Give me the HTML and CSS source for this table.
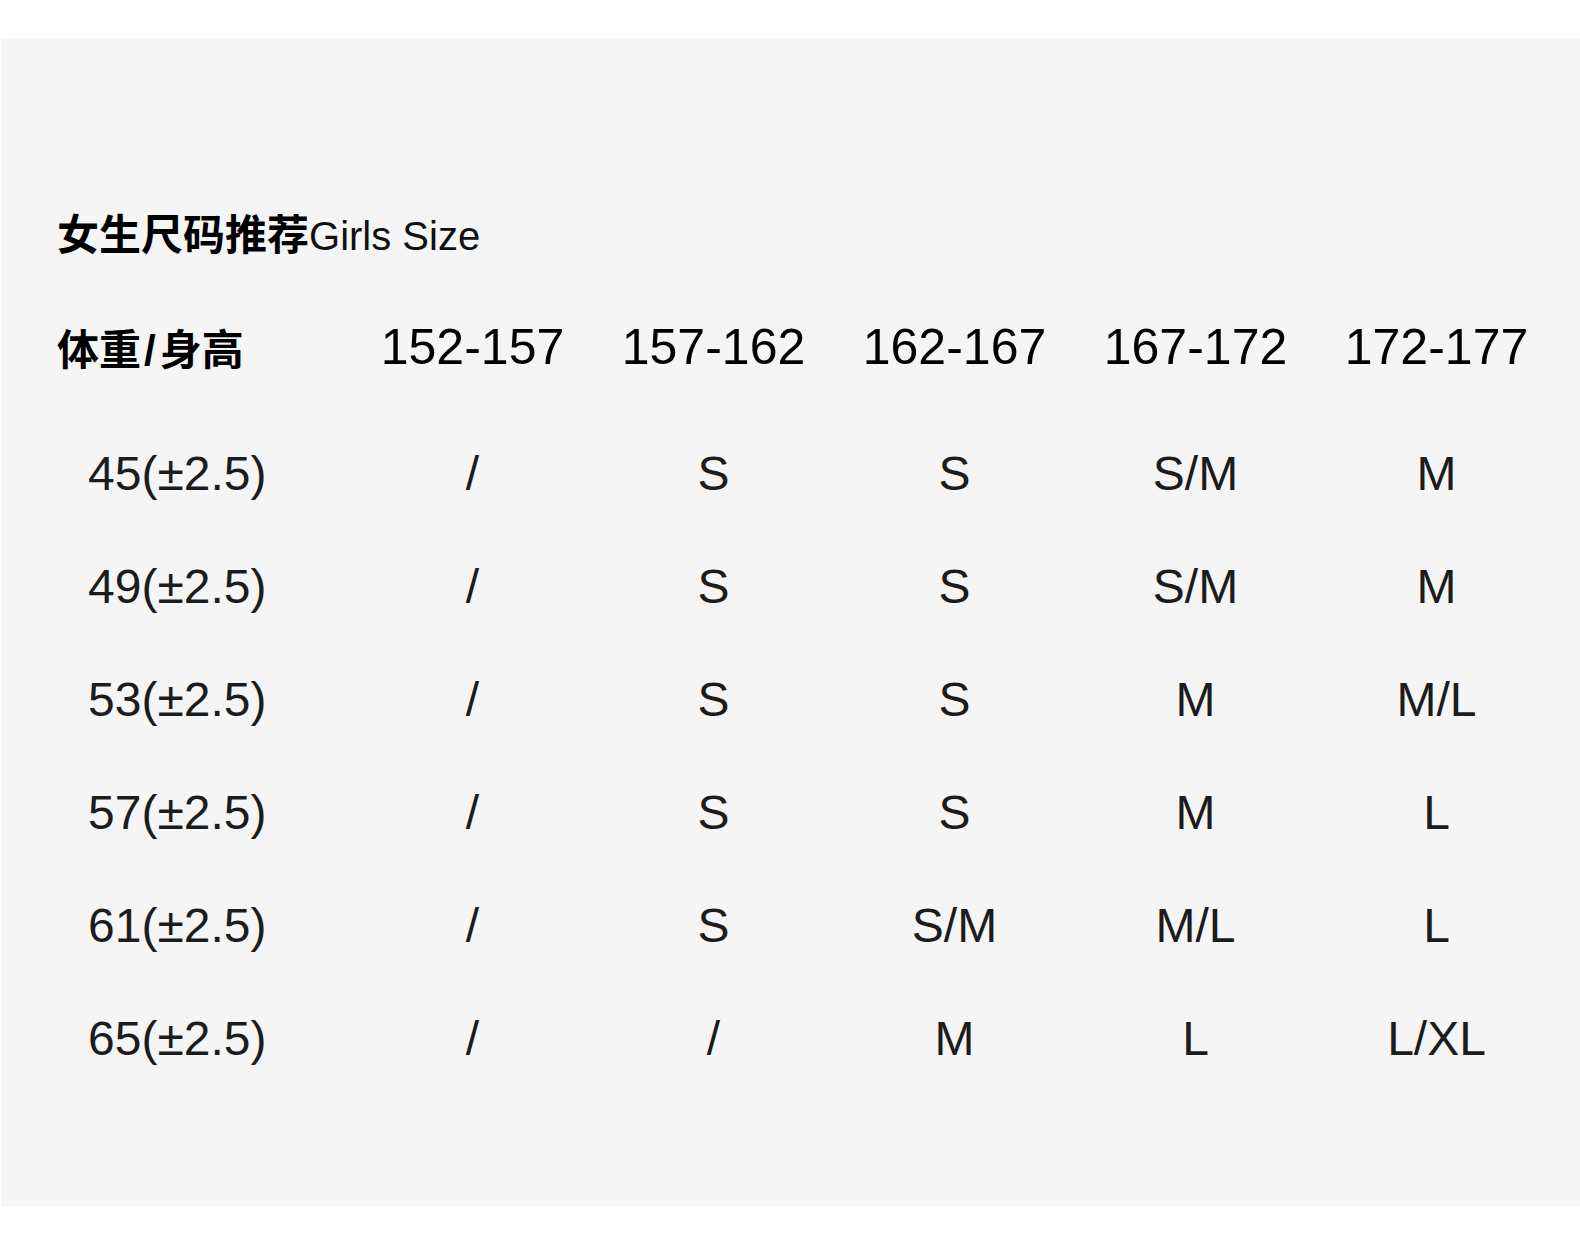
FILE: index.html
```html
<!DOCTYPE html>
<html lang="zh-CN">
<head>
<meta charset="utf-8">
<title>女生尺码推荐 Girls Size</title>
<link rel="stylesheet" href="styles.css">
</head>
<body>
<div class="page">
  <section class="panel">
    <h1 class="title"><span class="cjk">女生尺码推荐</span><span class="latin">Girls Size</span></h1>
    <div class="grid">
      <div class="row head">
        <div class="label">体重<span class="slash">/</span>身高</div>
        <div class="cell">152-157</div>
        <div class="cell">157-162</div>
        <div class="cell">162-167</div>
        <div class="cell">167-172</div>
        <div class="cell">172-177</div>
      </div>
      <div class="row">
        <div class="label">45(±2.5)</div>
        <div class="cell">/</div><div class="cell">S</div><div class="cell">S</div><div class="cell">S/M</div><div class="cell">M</div>
      </div>
      <div class="row">
        <div class="label">49(±2.5)</div>
        <div class="cell">/</div><div class="cell">S</div><div class="cell">S</div><div class="cell">S/M</div><div class="cell">M</div>
      </div>
      <div class="row">
        <div class="label">53(±2.5)</div>
        <div class="cell">/</div><div class="cell">S</div><div class="cell">S</div><div class="cell">M</div><div class="cell">M/L</div>
      </div>
      <div class="row">
        <div class="label">57(±2.5)</div>
        <div class="cell">/</div><div class="cell">S</div><div class="cell">S</div><div class="cell">M</div><div class="cell">L</div>
      </div>
      <div class="row">
        <div class="label">61(±2.5)</div>
        <div class="cell">/</div><div class="cell">S</div><div class="cell">S/M</div><div class="cell">M/L</div><div class="cell">L</div>
      </div>
      <div class="row">
        <div class="label">65(±2.5)</div>
        <div class="cell">/</div><div class="cell">/</div><div class="cell">M</div><div class="cell">L</div><div class="cell">L/XL</div>
      </div>
    </div>
  </section>
</div>
</body>
</html>
```
FILE: styles.css
```css
html, body {
  margin: 0;
  padding: 0;
  background: #ffffff;
}

body {
  font-family: "Liberation Sans", Arial, "Noto Sans CJK SC", sans-serif;
  color: #1c1c1c;
}

.page {
  padding-top: 38px;
  width: 1580px;
  height: 1249px;
  box-sizing: border-box;
}

.panel {
  margin-left: 1px;
  height: 1168px;
  background: #f5f5f5;
  padding-left: 56px;
  padding-top: 169px;
  box-sizing: border-box;
}

.title {
  margin: 0;
  height: 50px;
  line-height: 50px;
  font-weight: normal;
  display: flex;
  align-items: baseline;
}

.title .cjk {
  font-family: "Noto Sans CJK SC", sans-serif;
  font-weight: 700;
  font-size: 42px;
  color: #000;
}

.title .latin {
  font-family: "Liberation Sans", Arial, sans-serif;
  font-size: 40px;
  color: #111;
}

.grid {
  margin-top: 59px;
  display: flex;
  flex-direction: column;
}

.row {
  display: grid;
  grid-template-columns: 295px repeat(5, 241px);
  height: 113px;
  align-items: center;
}

.row.head {
  height: 60px;
  margin-bottom: 41px;
}

.label {
  padding-left: 31px;
  font-size: 48px;
  white-space: nowrap;
}

.cell {
  text-align: center;
  font-size: 48px;
  white-space: nowrap;
}

.head .label {
  padding-left: 0;
  font-family: "Noto Sans CJK SC", sans-serif;
  font-weight: 700;
  font-size: 42px;
  color: #000;
}

.head .label .slash {
  font-family: "Liberation Sans", Arial, sans-serif;
  font-weight: 700;
  margin: 0 4px 0 3px;
}

.head .cell {
  font-size: 50px;
  color: #000;
}
```
